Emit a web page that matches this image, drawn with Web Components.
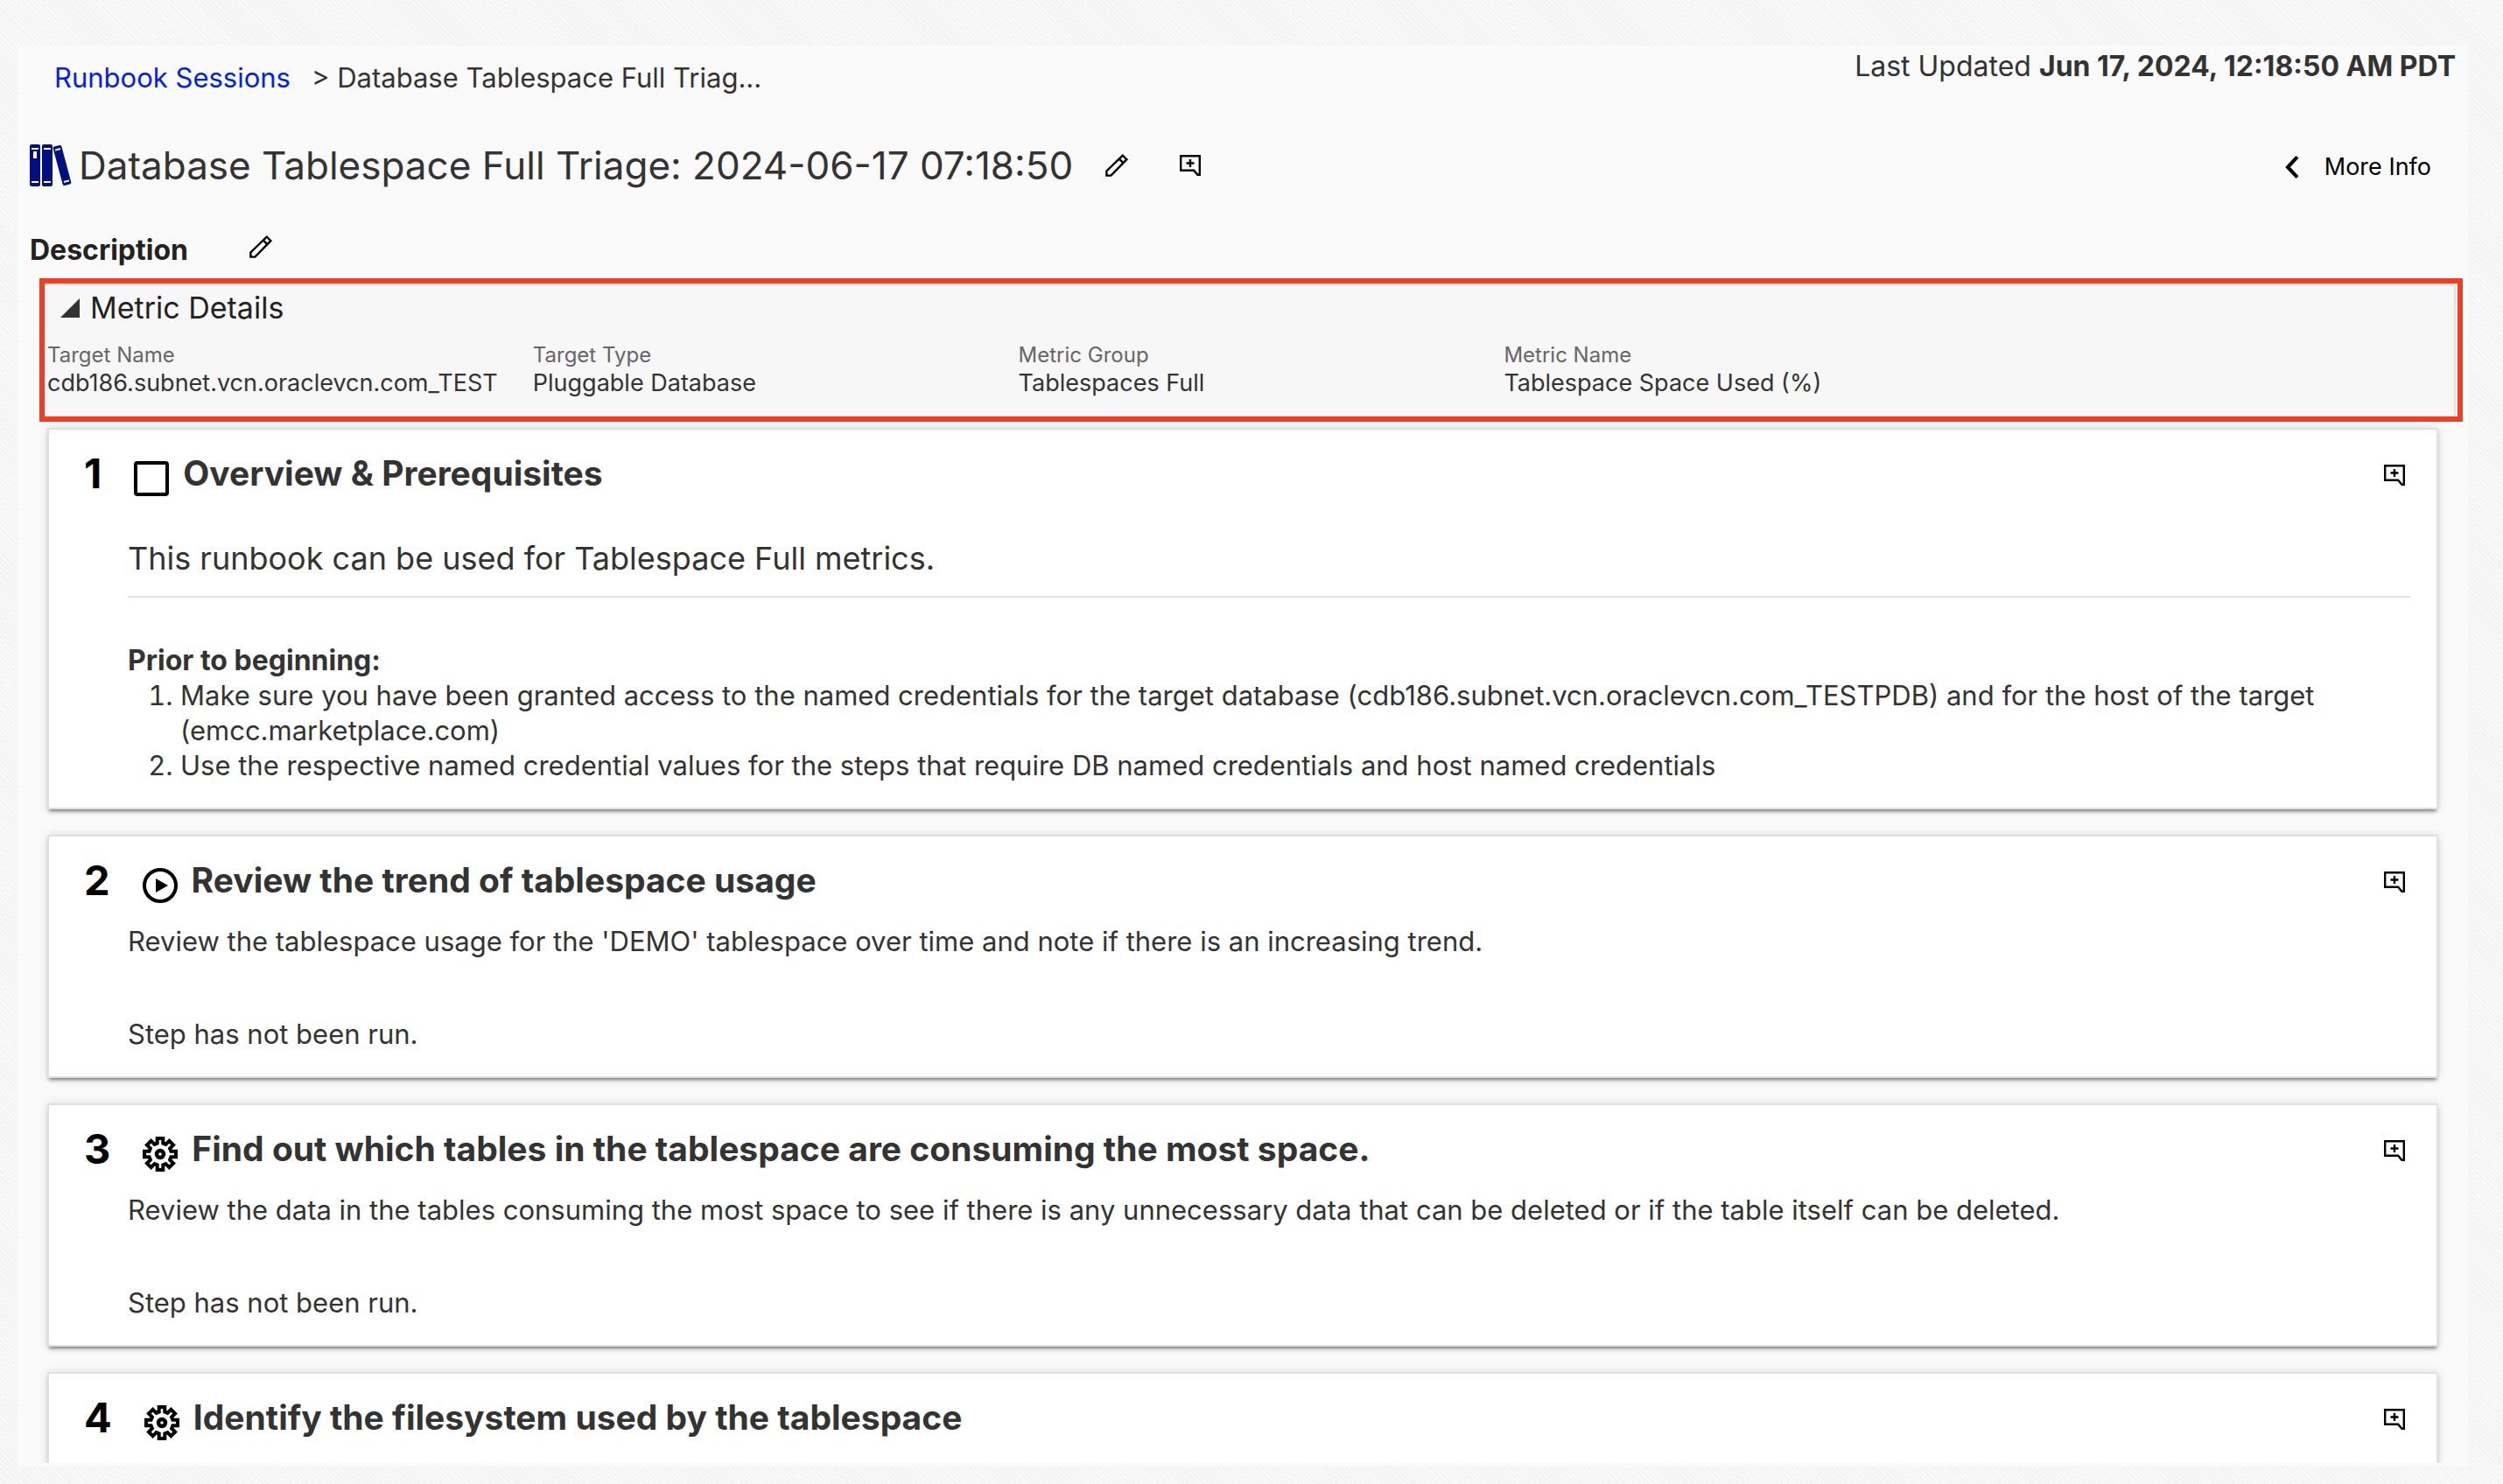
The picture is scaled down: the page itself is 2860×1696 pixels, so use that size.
<!DOCTYPE html>
<html lang="en">
<head>
<meta charset="utf-8">
<title>Runbook Session</title>
<style>
  body {
    margin: 0;
    font-family: Inter, "Liberation Sans", sans-serif;
    font-size: 31px;
    line-height: 40px;
    color: #333;
  }
</style>
</head>
<body>
<runbook-session>
  <session-header slot="header" updated="Jun 17, 2024, 12:18:50 AM PDT" crumb="Database Tablespace Full Triag..." name="Database Tablespace Full Triage: 2024-06-17 07:18:50"></session-header>
  <metric-details>
    <metric-field label="Target Name">cdb186.subnet.vcn.oraclevcn.com_TEST</metric-field>
    <metric-field label="Target Type">Pluggable Database</metric-field>
    <metric-field label="Metric Group">Tablespaces Full</metric-field>
    <metric-field label="Metric Name">Tablespace Space Used (%)</metric-field>
  </metric-details>
  <runbook-step number="1" kind="check" name="Overview &amp; Prerequisites">
    <step-overview></step-overview>
  </runbook-step>
  <runbook-step number="2" kind="play" name="Review the trend of tablespace usage">
    <step-summary>Review the tablespace usage for the 'DEMO' tablespace over time and note if there is an increasing trend.</step-summary>
  </runbook-step>
  <runbook-step number="3" kind="gear" name="Find out which tables in the tablespace are consuming the most space.">
    <step-summary>Review the data in the tables consuming the most space to see if there is any unnecessary data that can be deleted or if the table itself can be deleted.</step-summary>
  </runbook-step>
  <runbook-step number="4" kind="gear" name="Identify the filesystem used by the tablespace"></runbook-step>
</runbook-session>

<script>
const define = (tag, render) => customElements.define(tag, class extends HTMLElement {
  connectedCallback() {
    if (this.shadowRoot) return;
    this.attachShadow({ mode: 'open' }).innerHTML = render(this);
  }
});
const esc = s => (s || '').replace(/&/g, '&amp;').replace(/</g, '&lt;');

// Gear outline: eight square teeth round a ring.
const gearPath = (() => {
  const pts = [];
  for (let i = 0; i < 8; i++) {
    const a = i * Math.PI / 4;
    for (const [r, w] of [[12.4, -3.3], [18, -3.3], [18, 3.3], [12.4, 3.3]]) {
      pts.push((20 + r * Math.cos(a) - w * Math.sin(a)).toFixed(2) + ' ' + (20 + r * Math.sin(a) + w * Math.cos(a)).toFixed(2));
    }
  }
  return 'M' + pts.join('L') + 'Z';
})();

const ICONS = {
  pencil: [26, `<g fill="none" stroke="#000" stroke-width="2.4"><path d="M1.4 24.6V19.4L19.8 1.6L24.4 6.2L6.4 24.6Z"/><path d="M15.8 5.6L20.4 10.2"/></g>`],
  comment: [24, `<path fill="none" stroke="#000" stroke-width="2.4" d="M1.2 1.2H22.8V22.8H20.4L16.2 17.8H1.2Z"/><path stroke="#000" stroke-width="2.4" d="M12 5V14M7.5 9.5H16.5"/>`],
  books: [48, `<g fill="#000f80"><rect width="12" height="48" rx="2"/><rect x="14" width="12" height="48" rx="2"/><rect x="-5" y="-23" width="10" height="46" rx="2" transform="translate(37 24) rotate(-15)"/></g><path stroke="#fff" stroke-width="2" d="M2 5H10M2 43H10M16 5H24M16 43H24M29 6.6L35 5M39 43L45 41.4"/><path fill="#fff" d="M4 8H8V16H4Z"/>`],
  play: [40, `<circle cx="20" cy="20" r="18" fill="none" stroke="#000" stroke-width="4"/><path d="M15 12L29 20L15 28Z"/>`],
  gear: [40, `<path fill="none" stroke="#000" stroke-width="4" d="${gearPath}"/><circle cx="20" cy="20" r="4" fill="none" stroke="#000" stroke-width="4.4"/>`],
  back: [26, `<path fill="none" stroke="#000" stroke-width="4" d="M19 1.4L8 13L19 24.6"/>`],
  open: [22, `<path fill="#333" d="M22 0V22H0Z"/>`]
};

define('rb-icon', el => {
  const [size, art] = ICONS[el.getAttribute('name')];
  return `<style>:host{display:block;flex:none}svg{display:block;overflow:visible}</style>
    <svg width="${size}" height="${size}" viewBox="0 0 ${size} ${size}" aria-hidden="true">${art}</svg>`;
});

define('runbook-session', () => `<style>
    :host{display:block;box-sizing:border-box;height:100vh;padding:52px 40px 20px 20px;
      background:repeating-linear-gradient(45deg,#f3f3f3 0 2px,#f9f9f9 2px 4px)}
    .panel{box-sizing:border-box;height:100%;padding:4px 0;background:#fafafa}
    .scroll{height:100%;overflow:hidden}
    .body{display:flex;flex-direction:column;gap:29px;padding-bottom:29px}
    ::slotted(metric-details){margin:0 6px -22px 25px}
    ::slotted(runbook-step){margin:0 34px}
  </style>
  <main class="panel"><div class="scroll"><slot name="header"></slot><div class="body"><slot></slot></div></div></main>`);

define('session-header', el => `<style>
    :host{display:block;padding-bottom:12px}
    .row{display:flex;align-items:center}
    .top{justify-content:space-between;align-items:flex-start;padding:0 14px 0 42px}
    nav{display:flex;gap:24px;padding-top:13px}
    a{color:#0020ee;text-decoration:none}
    .updated{font-size:32px}
    .title{margin-top:52px;padding:0 42px 0 14px}
    h1{margin:0 37px 0 8px;font-size:44px;line-height:56px;font-weight:400}
    h2{margin:0 70px 0 0;font-size:32px;font-weight:700;color:#222}
    button{display:flex;align-items:center;padding:0;border:0;background:none;font:inherit;color:#000}
    .note{margin-left:59px}
    .more{gap:24px;margin-left:auto;padding-top:3px;font-size:27px}
    .desc{margin-top:49px;padding-left:14px}
    .desc button{margin-bottom:8px}
  </style>
  <div class="row top">
    <nav aria-label="Breadcrumb"><a href="#">Runbook Sessions</a><span>&gt; ${esc(el.getAttribute('crumb'))}</span></nav>
    <div class="updated">Last Updated <strong>${esc(el.getAttribute('updated'))}</strong></div>
  </div>
  <div class="row title">
    <rb-icon name="books"></rb-icon>
    <h1>${esc(el.getAttribute('name'))}</h1>
    <button type="button" aria-label="Edit name"><rb-icon name="pencil"></rb-icon></button>
    <button type="button" class="note" aria-label="Add comment"><rb-icon name="comment"></rb-icon></button>
    <button type="button" class="more"><rb-icon name="back"></rb-icon>More Info</button>
  </div>
  <div class="row desc">
    <h2>Description</h2>
    <button type="button" aria-label="Edit description"><rb-icon name="pencil"></rb-icon></button>
  </div>`);

define('metric-details', () => `<style>
    :host{display:block;border:6px solid #ee3f24}
    details{margin-right:2px;padding:6px 0 21px 3px;border:solid #e0e0e0;border-width:2px 2px 1px 0;background:#f7f7f7}
    summary{display:flex;align-items:center;gap:12px;padding-left:15px;list-style:none;font-size:34px;color:#222}
    .fields{display:grid;grid-template-columns:repeat(5,1fr);gap:24px;margin-top:18px}
  </style>
  <details open>
    <summary><rb-icon name="open"></rb-icon>Metric Details</summary>
    <div class="fields"><slot></slot></div>
  </details>`);

define('metric-field', el => `<style>
    :host{display:block;line-height:32px;white-space:nowrap}
    .label{font-size:24px;color:#666}
    .value{font-size:27px}
  </style>
  <div class="label">${esc(el.getAttribute('label'))}</div><div class="value"><slot></slot></div>`);

define('runbook-step', el => {
  const kind = el.getAttribute('kind');
  const name = esc(el.getAttribute('name'));
  const control = kind === 'check'
    ? `<input type="checkbox" id="done" aria-label="${name}">`
    : `<button type="button" class="run" aria-label="Run step"><rb-icon name="${kind}"></rb-icon></button>`;
  return `<style>
    :host{display:block;padding:22px 30px 28px 90px;border:2px solid #e0e0e0;border-radius:2px;background:#fff;
      box-shadow:0 4px 4px -2px rgba(0,0,0,.5),0 0 12px rgba(0,0,0,.12)}
    header{display:flex;align-items:center;margin-left:-50px;line-height:56px}
    .number{margin-right:37px;font-size:47px;font-weight:700;color:#000}
    h2{margin:0 auto 0 16px;font-size:39px;font-weight:700}
    button{display:block;padding:0;border:0;background:none}
    input{appearance:none;box-sizing:border-box;width:40px;height:40px;margin:12px 0 0;border:4px solid #000;border-radius:4px}
    .run{margin-top:12px}
    .note{margin:4px 6px 0 0}
  </style>
  <header>
    <span class="number">${el.getAttribute('number')}</span>${control}
    <h2>${name}</h2>
    <button type="button" class="note" aria-label="Add comment"><rb-icon name="comment"></rb-icon></button>
  </header>
  <slot></slot>`;
});

define('step-overview', () => `<style>
    :host{display:block}
    .intro{margin:45px 0 0;padding-bottom:19px;border-bottom:2px solid #e4e4e4;font-size:36px;line-height:48px}
    h3{margin:52px 0 0;font-size:32px;font-weight:700;line-height:40px}
    ol{margin:0;padding-left:60px}
  </style>
  <p class="intro">This runbook can be used for Tablespace Full metrics.</p>
  <h3>Prior to beginning:</h3>
  <ol>
    <li>Make sure you have been granted access to the named credentials for the target database (cdb186.subnet.vcn.oraclevcn.com_TESTPDB) and for the host of the target (emcc.marketplace.com)</li>
    <li>Use the respective named credential values for the steps that require DB named credentials and host named credentials</li>
  </ol>`);

define('step-summary', () => `<style>
    :host{display:block}
    p{margin:22px 0 0}
    .status{margin-top:66px}
  </style>
  <p><slot></slot></p>
  <p class="status">Step has not been run.</p>`);
</script>
</body>
</html>
